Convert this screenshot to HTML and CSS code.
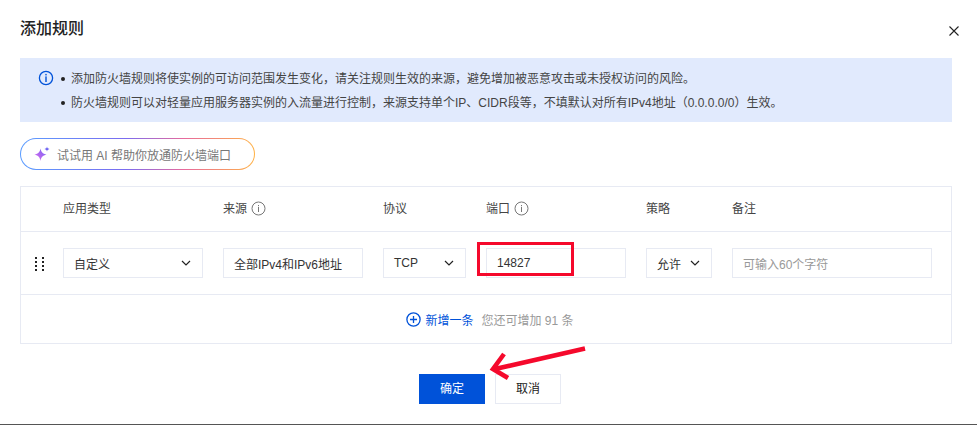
FILE: index.html
```html
<!DOCTYPE html>
<html lang="zh-CN">
<head>
<meta charset="utf-8">
<title>添加规则</title>
<link rel="stylesheet" href="styles.css">
</head>
<body>
<main class="dialog">
  <header class="head">
    <h1 class="title">添加规则</h1>
    <svg class="close" width="12" height="12" viewBox="0 0 12 12"><path d="M1.500 1.500l9 9M10.500 1.500l-9 9" stroke="#222" stroke-width="1.100" fill="none"/></svg>
  </header>
  <section class="alert">
    <svg class="alert-icon" width="16" height="16" viewBox="0 0 16 16"><circle cx="8" cy="8" r="6.600" fill="none" stroke="#0052d9" stroke-width="1.300"/><rect x="7.300" y="3.900" width="1.400" height="1.500" fill="#0052d9"/><rect x="7.300" y="6.400" width="1.400" height="5.600" fill="#0052d9"/></svg>
    <ul class="alert-list">
      <li>添加防火墙规则将使实例的可访问范围发生变化，请关注规则生效的来源，避免增加被恶意攻击或未授权访问的风险。</li>
      <li>防火墙规则可以对轻量应用服务器实例的入流量进行控制，来源支持单个IP、CIDR段等，不填默认对所有IPv4地址（0.0.0.0/0）生效。</li>
    </ul>
  </section>
  <div class="ai-pill">
    <svg width="16" height="16" viewBox="0 0 16 16"><defs><linearGradient id="spark" x1="0" y1="1" x2="1" y2="0"><stop offset="0" stop-color="#e56bf0"/><stop offset="1" stop-color="#6d63f2"/></linearGradient></defs><path d="M6.500 2.500C7.200 6 8.500 7.600 12.500 8.600 8.500 9.600 7.200 11.200 6.500 15 5.800 11.200 4.500 9.600 .5 8.600 4.500 7.600 5.800 6 6.500 2.500Z" fill="url(#spark)"/><path d="M13 .5c.3 1.500.8 2 2.500 2.500-1.700.5-2.200 1-2.500 2.500-.3-1.500-.8-2-2.500-2.500 1.700-.5 2.200-1 2.500-2.500Z" fill="#6d63f2"/></svg>
    <span>试试用 AI 帮助你放通防火墙端口</span>
  </div>
  <section class="table">
    <div class="grid head-row">
      <span>应用类型</span>
      <span class="with-tip">来源 <svg class="tip" width="15" height="15" viewBox="0 0 15 15"><circle cx="7.500" cy="7.500" r="6.500" fill="none" stroke="#777" stroke-width="1"/><rect x="7" y="4" width="1" height="1.200" fill="#777"/><rect x="7" y="6" width="1" height="5" fill="#777"/></svg></span>
      <span>协议</span>
      <span class="with-tip">端口 <svg class="tip" width="15" height="15" viewBox="0 0 15 15"><circle cx="7.500" cy="7.500" r="6.500" fill="none" stroke="#777" stroke-width="1"/><rect x="7" y="4" width="1" height="1.200" fill="#777"/><rect x="7" y="6" width="1" height="5" fill="#777"/></svg></span>
      <span>策略</span>
      <span>备注</span>
    </div>
    <div class="grid body-row">
      <svg class="drag" width="10" height="14" viewBox="0 0 10 14"><g fill="#222"><rect x="0" y="0" width="2" height="2"/><rect x="7" y="0" width="2" height="2"/><rect x="0" y="4" width="2" height="2"/><rect x="7" y="4" width="2" height="2"/><rect x="0" y="8" width="2" height="2"/><rect x="7" y="8" width="2" height="2"/><rect x="0" y="12" width="2" height="2"/><rect x="7" y="12" width="2" height="2"/></g></svg>
      <div class="field select"><span>自定义</span><svg width="10" height="6" viewBox="0 0 10 6"><path d="M1 1l4 4 4-4" stroke="#222" stroke-width="1.200" fill="none"/></svg></div>
      <div class="field"><span>全部IPv4和IPv6地址</span></div>
      <div class="field select"><span>TCP</span><svg width="10" height="6" viewBox="0 0 10 6"><path d="M1 1l4 4 4-4" stroke="#222" stroke-width="1.200" fill="none"/></svg></div>
      <div class="field"><span>14827</span></div>
      <div class="field select"><span>允许</span><svg width="10" height="6" viewBox="0 0 10 6"><path d="M1 1l4 4 4-4" stroke="#222" stroke-width="1.200" fill="none"/></svg></div>
      <div class="field placeholder"><span>可输入60个字符</span></div>
    </div>
    <div class="add-row">
      <svg width="15" height="15" viewBox="0 0 15 15"><circle cx="7.500" cy="7.500" r="6.600" fill="none" stroke="#0052d9" stroke-width="1.300"/><path d="M7.500 4v7M4 7.500h7" stroke="#0052d9" stroke-width="1.300"/></svg>
      <span class="add-link">新增一条</span>
      <span class="add-note">您还可增加 91 条</span>
    </div>
  </section>
  <footer class="actions">
    <button class="btn primary" type="button">确定</button>
    <button class="btn" type="button">取消</button>
  </footer>
</main>
<div class="mark-box"></div>
<svg class="mark-arrow" width="100" height="40" viewBox="0 0 100 40"><path d="M96 3.500L6 24M15 9L4 24 19 33" fill="none" stroke="#f5092c" stroke-width="4.600"/></svg>
</body>
</html>
```
FILE: styles.css
```css
* { box-sizing: border-box; }
html, body { margin: 0; height: 100%; overflow: hidden; }
body {
  position: relative;
  background: #fff;
  color: #222;
  font-family: "Liberation Sans", "Noto Sans CJK SC", sans-serif;
  font-size: 12px;
  text-spacing-trim: space-all;
}
.dialog {
  height: 425px;
  padding: 0 25px 0 20px;
  border-bottom: 1px solid #555;
}
.head {
  height: 58px;
  display: flex;
  justify-content: space-between;
  align-items: center;
  margin-right: -8px;
}
.title { margin: 0; font-size: 16px; line-height: 24px; font-weight: 500; color: #222; }
.close { margin-top: 4px; }
.alert {
  height: 64px;
  background: #e1eafd;
  display: flex;
  padding: 9px 18px;
  gap: 6px;
  color: #444;
}
.alert-icon { flex: none; margin-top: 3px; }
.alert-list { margin: 0; padding: 0; list-style: none; }
.alert-list li { line-height: 24px; padding-left: 11px; position: relative; white-space: nowrap; }
.alert-list li::before {
  content: "";
  position: absolute;
  left: 1px;
  top: 10px;
  width: 4px;
  height: 4px;
  border-radius: 50%;
  background: #222;
}
.ai-pill {
  width: 235px;
  height: 32px;
  margin-top: 16px;
  border: 1px solid transparent;
  border-radius: 16px;
  background:
    linear-gradient(#fff, #fff) padding-box,
    linear-gradient(90deg, #5b9dff 0%, #7b6cf0 45%, #e86a9c 70%, #ffb347 100%) border-box;
  display: flex;
  align-items: center;
  gap: 7px;
  padding-left: 13px;
  color: #777;
}
.table { height: 158px; margin-top: 16px; border: 1px solid #e7eaf3; }
.grid {
  display: grid;
  grid-template-columns: 140px 140px 83px 140px 66px 200px;
  column-gap: 20px;
  padding-left: 42px;
  position: relative;
  border-bottom: 1px solid #e7eaf3;
}
.head-row { height: 45px; align-items: center; color: #444; padding-bottom: 4px; }
.with-tip { display: flex; align-items: center; gap: 4px; }
.tip { display: block; margin-top: 2px; }
.body-row { height: 63px; padding-top: 16px; }
.drag { position: absolute; left: 14px; top: 25px; }
.field {
  height: 30px;
  border: 1px solid #e7eaf3;
  padding: 0 10px;
  display: flex;
  align-items: center;
  justify-content: space-between;
  white-space: nowrap;
  color: #333;
}
.select svg { flex: none; margin-right: 1px; }
.placeholder { color: #999; }
.add-row {
  height: 49px;
  display: flex;
  align-items: center;
  justify-content: center;
  gap: 4px;
  padding-left: 8px;
}
.add-link { color: #0052d9; }
.add-note { color: #999; margin-left: 4px; }
.actions { display: flex; justify-content: center; gap: 10px; margin-top: 30px; padding-left: 8px; }
.btn {
  width: 66px;
  height: 30px;
  border: 1px solid #e7eaf3;
  background: #fff;
  color: #222;
  font: inherit;
  padding: 0 0 3px;
}
.primary { background: #0052d9; border-color: #0052d9; color: #fff; }
.mark-box {
  position: absolute;
  left: 477px;
  top: 242px;
  width: 97px;
  height: 34px;
  border: 3px solid #f5092c;
}
.mark-arrow { position: absolute; left: 489px; top: 345px; }
```
